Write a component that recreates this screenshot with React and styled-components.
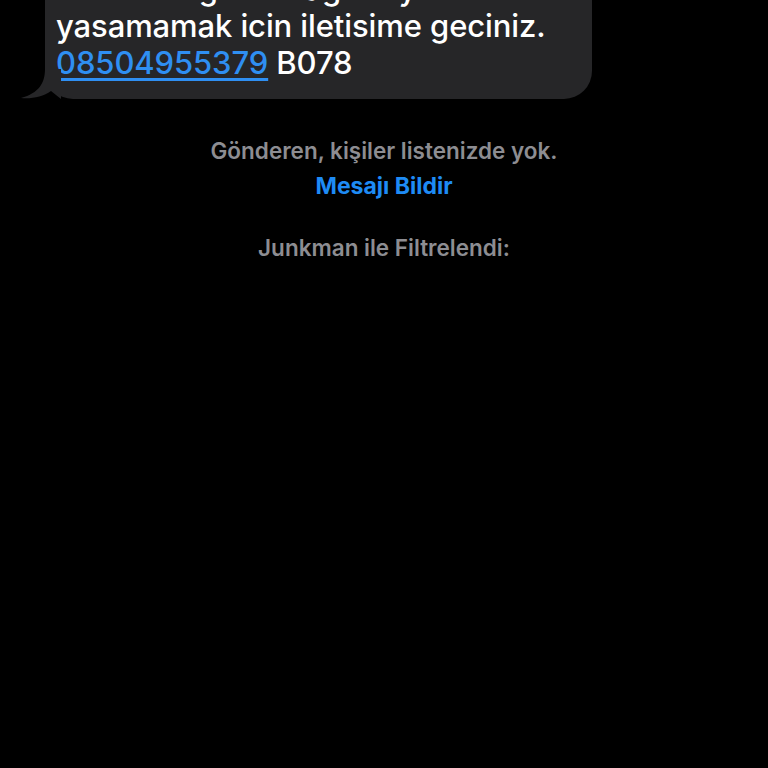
import React from 'react';
import styled, { createGlobalStyle } from 'styled-components';

const GlobalStyle = createGlobalStyle`
    html, body {
        margin: 0;
        padding: 0;
        background: #000;
    }
    body {
        font-family: Inter, "Noto Sans", "Liberation Sans", sans-serif;
        -webkit-font-smoothing: antialiased;
    }
`

const Screen = styled.div`
    width: 768px;
    height: 768px;
    overflow: hidden;
    background: #000;
    display: flex;
    flex-direction: column;
`

const MessageRow = styled.div`
    display: flex;
    padding-left: 45px;
    margin-top: -34px;
`

const Bubble = styled.div`
    position: relative;
    width: 547px;
    box-sizing: border-box;
    background: #262628;
    border-radius: 0 0 28px 28px;
    padding: 4px 12px 18px 11px;
    color: #fff;
    font-size: 31px;
    line-height: 37px;
    font-weight: 500;
    letter-spacing: -0.1px;
`

const Tail = styled.svg`
    position: absolute;
    left: -24px;
    bottom: 0;
    width: 40px;
    height: 30px;
`

const Phone = styled.a`
    color: #2f8ff2;
    text-decoration: underline;
    text-decoration-thickness: 2.5px;
    text-underline-offset: 4px;
`

const Info = styled.div`
    display: flex;
    flex-direction: column;
    align-items: center;
    margin-top: 37px;
`

const Note = styled.div`
    color: #8d8d92;
    font-size: 22.5px;
    font-weight: 600;
    line-height: 30px;
    margin-top: ${props => props.gap || 0}px;
`

const Action = styled.div`
    color: #1e8bf5;
    font-size: 23px;
    font-weight: 700;
    line-height: 30px;
    margin-top: 5px;
`

function App() {
    return (
        <Screen>
            <GlobalStyle />
            <MessageRow>
                <Bubble>
                    <div>uzerek bilgi ve magduriyetini</div>
                    <div>yasamamak icin iletisime geciniz.</div>
                    <div><Phone>08504955379</Phone> B078</div>
                    <Tail viewBox="0 0 40 30">
                        <path d="M24 0 C24 14 18 24 0 29 C10 30 22 28 30 22 L40 30 L40 0 Z" fill="#262628" />
                    </Tail>
                </Bubble>
            </MessageRow>
            <Info>
                <Note>Gönderen, kişiler listenizde yok.</Note>
                <Action>Mesajı Bildir</Action>
                <Note gap={32}>Junkman ile Filtrelendi:</Note>
            </Info>
        </Screen>
    );
}

export default App;
